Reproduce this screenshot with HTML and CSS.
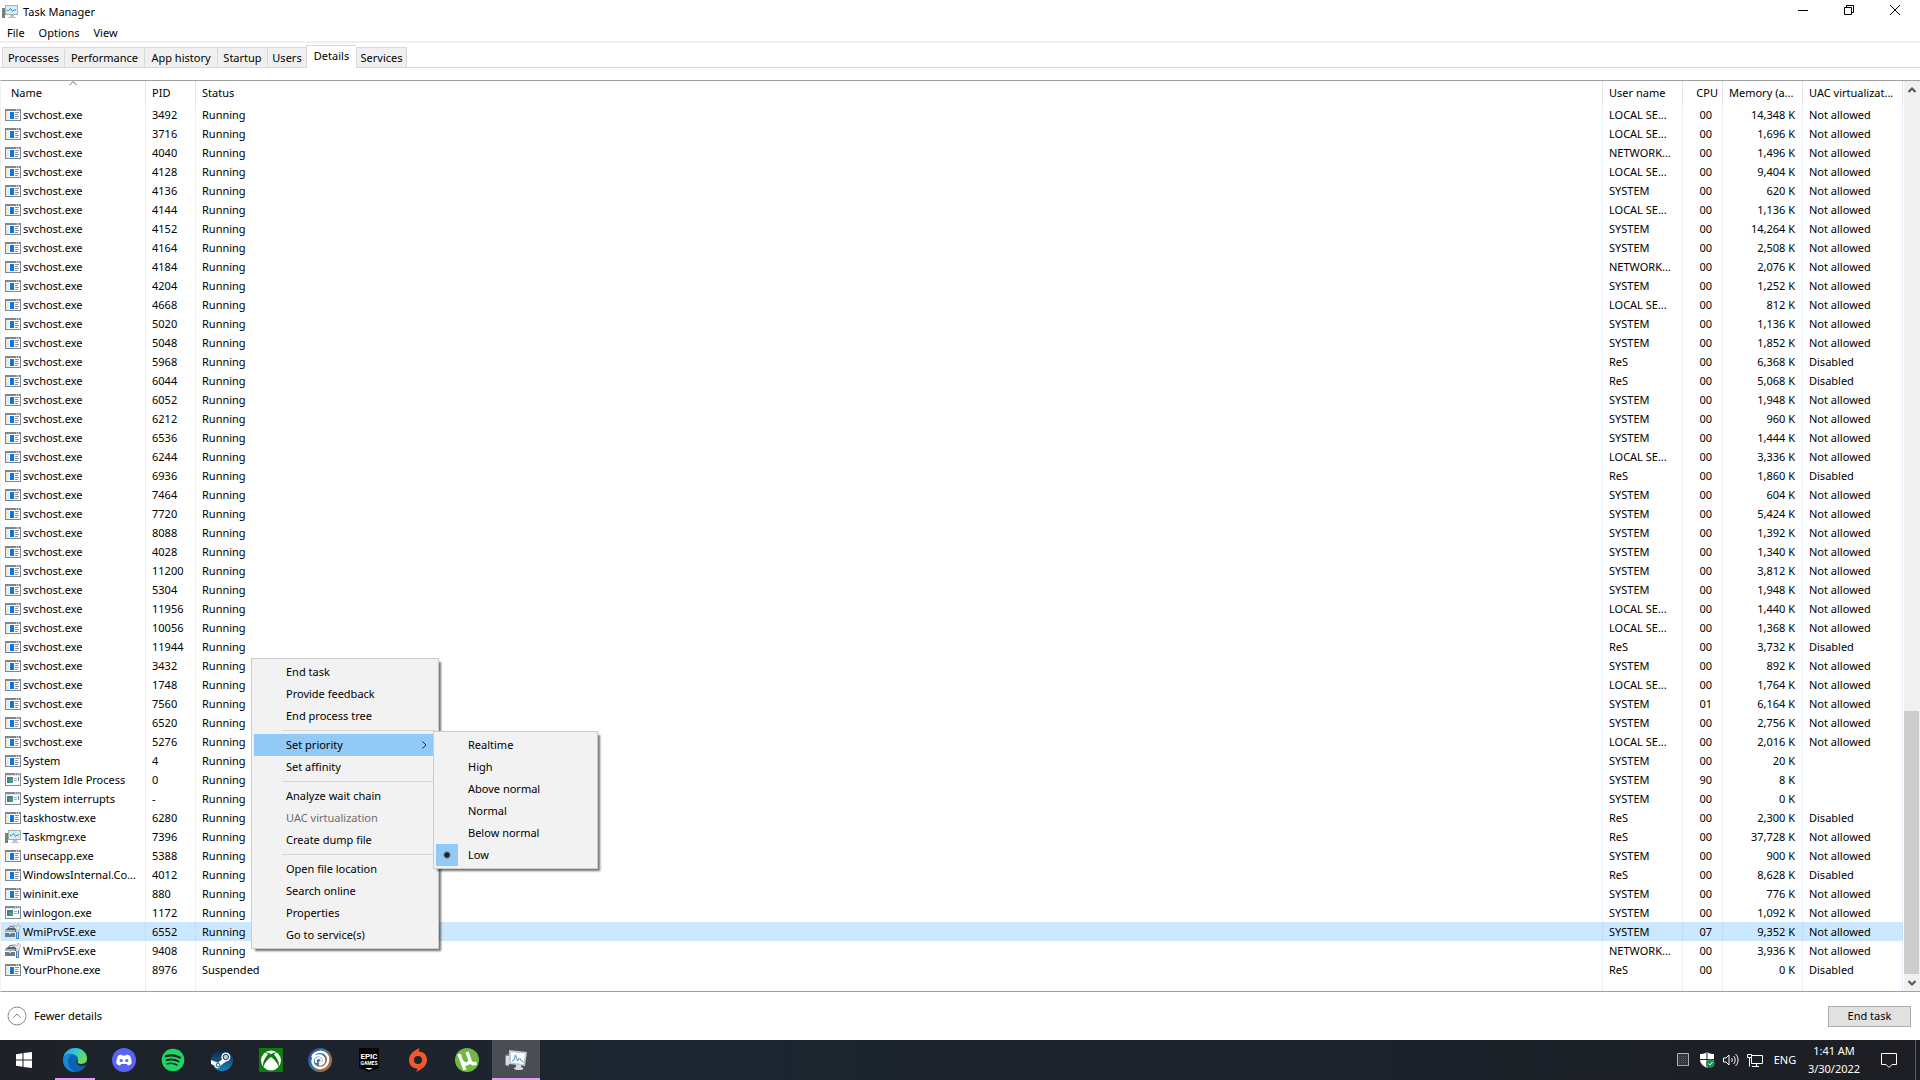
FILE: index.html
```html
<!DOCTYPE html>
<html lang="en">

<head>
    <meta charset="UTF-8">
    <meta name="viewport" content="width=device-width, initial-scale=1.0">
    <title>Task Manager</title>
    <link rel="stylesheet" href="styles.css">
</head>

<body>
    <!-- shared process icons -->
    <svg class="sprite" aria-hidden="true">
        <symbol id="icon-app" viewBox="0 0 16 16">
            <path fill="#7e8790" d="M0 2h16v12H0z" />
            <path fill="#fff" d="M1 4h14v9H1z" />
            <path fill="#e8eaec" d="M1 4h3v9H1z" />
            <path fill="#0a78d7" d="M5 5h4v7H5z" />
            <path fill="#8a929a" d="M10 5h4v1h-4zM10 7h3v1h-3zM10 9h4v1h-4zM10 11h3v1h-3z" />
            <path fill="#fff" d="M11 2.5h1v1h-1zM13 2.5h1v1h-1z" />
        </symbol>
        <symbol id="icon-system" viewBox="0 0 16 16">
            <path fill="#838b8f" d="M0 1h16v13H0z" />
            <path fill="#fdfdfd" d="M1 3h14v10H1z" />
            <path fill="#e0e3e6" d="M1 3h14v1H1z" />
            <path fill="#46799a" d="M2 5h6v6H2z" />
            <path fill="#4d9a7e" d="M3 7h5v4H5z" />
            <path fill="#a7afb6" d="M9 6h3v1H9zM9 8h3v1H9z" />
            <path fill="#4b8fa7" d="M13 5h1v4h-1z" />
            <path fill="#fff" d="M10 1.5h1v1h-1zM12 1.5h1v1h-1zM14 1.5h1v1h-1z" />
        </symbol>
        <symbol id="icon-taskmgr" viewBox="0 0 16 16">
            <path fill="#777d80" d="M0 4h3v10H0z" />
            <path fill="#35c32d" d="M1 7h1v2H1z" />
            <path fill="#a9aeb1" d="M3 1h13v10H3z" />
            <path fill="#e5e8e9" d="M4 2h11v8H4z" />
            <path fill="#d2effa" d="M5 3h9v6H5z" />
            <path fill="none" stroke="#1795cd" d="M5 6.500h1.500l2-2 2 3 1.500-1.500h2" />
            <path fill="#bfc3c5" d="M8 11h4v2h2v1H6v-1h2z" />
        </symbol>
        <symbol id="icon-toolbox" viewBox="0 0 16 16">
            <path fill="none" stroke="#6a737a" d="M4 5V3l4-1v3" />
            <path fill="#59636b" d="M0 6l3-2h8v4H0z" />
            <path fill="#a9b1b8" d="M0 6h10v2H0z" />
            <path fill="#6f7b85" d="M0 9h10v4H0z" />
            <path fill="#d4dade" d="M4 8h2v2H4z" />
            <path fill="#e6eaed" stroke="#8b949b" stroke-width=".6" d="M9 1l3 2 1-3c3 1 3 4 1 5v4h-2V6C10 5 9 3 9 1z" />
            <path fill="#4a80bb" d="M11 8h3v7h-3z" />
            <path fill="#b5d3ef" d="M12 8h1v6h-1z" />
        </symbol>
    </svg>

    <main class="window">
        <header class="titlebar">
            <svg class="icon" viewBox="0 0 16 16"><use href="#icon-taskmgr" /></svg>
            <h1>Task Manager</h1>
            <div class="window-buttons">
                <button type="button" aria-label="Minimize">
                    <svg viewBox="0 0 10 10"><path d="M0 5.500h10" /></svg>
                </button>
                <button type="button" aria-label="Restore">
                    <svg viewBox="0 0 10 10"><path d="M.5 2.500h7v7h-7zM2.500 2.500v-2h7v7h-2" /></svg>
                </button>
                <button type="button" aria-label="Close">
                    <svg viewBox="0 0 10 10"><path d="M0 0l10 10M10 0L0 10" /></svg>
                </button>
            </div>
        </header>

        <nav class="menubar">
            <button type="button">File</button>
            <button type="button">Options</button>
            <button type="button">View</button>
        </nav>

        <div class="tabs" role="tablist">
            <button type="button" role="tab">Processes</button>
            <button type="button" role="tab">Performance</button>
            <button type="button" role="tab">App history</button>
            <button type="button" role="tab">Startup</button>
            <button type="button" role="tab">Users</button>
            <button type="button" role="tab" class="selected" aria-selected="true">Details</button>
            <button type="button" role="tab">Services</button>
        </div>

        <section class="details">
            <table>
                <colgroup>
                    <col class="col-name">
                    <col class="col-pid">
                    <col class="col-status">
                    <col class="col-user">
                    <col class="col-cpu">
                    <col class="col-memory">
                    <col class="col-uac">
                </colgroup>
                <thead>
                    <tr>
                        <th class="sorted">Name
                            <svg class="sort-arrow" viewBox="0 0 8 4"><path d="M.5 4L4 .5 7.500 4" /></svg>
                        </th>
                        <th>PID</th>
                        <th>Status</th>
                        <th>User name</th>
                        <th class="cpu">CPU</th>
                        <th>Memory (a...</th>
                        <th>UAC virtualizat...</th>
                    </tr>
                </thead>
                <tbody id="processes"></tbody>
            </table>
            <div class="scrollbar">
                <button type="button" aria-label="Scroll up">
                    <svg viewBox="0 0 8 6"><path d="M.5 5L4 1.500 7.500 5" /></svg>
                </button>
                <div class="track">
                    <div class="thumb"></div>
                </div>
                <button type="button" aria-label="Scroll down">
                    <svg viewBox="0 0 8 6"><path d="M.5 1L4 4.500 7.500 1" /></svg>
                </button>
            </div>
        </section>

        <footer class="footer">
            <button type="button" class="fewer">
                <svg viewBox="0 0 20 20"><circle cx="10" cy="10" r="9" /><path d="M6 12l4-4 4 4" /></svg>
                Fewer details
            </button>
            <button type="button" class="end-task">End task</button>
        </footer>

        <div class="menu context-menu">
            <button type="button">End task</button>
            <button type="button">Provide feedback</button>
            <button type="button">End process tree</button>
            <hr>
            <div class="has-submenu">
                <button type="button" class="active">Set priority
                    <svg viewBox="0 0 5 8"><path d="M.5 .5L4 4 .5 7.500" /></svg>
                </button>
                <div class="menu submenu">
                    <label><input type="radio" name="priority">Realtime</label>
                    <label><input type="radio" name="priority">High</label>
                    <label><input type="radio" name="priority">Above normal</label>
                    <label><input type="radio" name="priority">Normal</label>
                    <label><input type="radio" name="priority">Below normal</label>
                    <label><input type="radio" name="priority" checked>Low</label>
                </div>
            </div>
            <button type="button">Set affinity</button>
            <hr>
            <button type="button">Analyze wait chain</button>
            <button type="button" disabled>UAC virtualization</button>
            <button type="button">Create dump file</button>
            <hr>
            <button type="button">Open file location</button>
            <button type="button">Search online</button>
            <button type="button">Properties</button>
            <button type="button">Go to service(s)</button>
        </div>
    </main>

    <div class="taskbar">
        <button type="button" class="start" aria-label="Start">
            <svg viewBox="0 0 24 24">
                <path fill="#fff" d="M4 6.200l6.500-.9v6.200H4zM11.500 5.100L20 4v7.500h-8.500zM4 12.500h6.500v6.200L4 17.800zM11.500 12.500H20V20l-8.500-1.100z" />
            </svg>
        </button>
        <div class="apps">
            <button type="button" class="running" aria-label="Edge">
                <svg viewBox="0 0 24 24">
                    <defs>
                        <linearGradient id="edge-top" x1="0" x2="1" y1="0" y2=".4">
                            <stop offset="0" stop-color="#219de2" />
                            <stop offset=".5" stop-color="#31c5d8" />
                            <stop offset="1" stop-color="#6bdc55" />
                        </linearGradient>
                    </defs>
                    <circle cx="12" cy="12" r="12" fill="#0c62b5" />
                    <path fill="url(#edge-top)" d="M0 11C1 4 6 0 12 0c7 0 12 5 12 10 0 4-3 6-6 6-3 0-4-1-3.500-2C17 9 12 6 8 6 4 6 1 8 0 11z" />
                    <path fill="#1688d5" d="M0 12c1-4 5-6 9-5-4 2-5 6-3 11 1 3 4 5 6 6C5 24 0 18 0 12z" />
                    <path fill="#1d222b" d="M14 12c-2 3 1 6 5 6 2 0 3-1 4-1l1-3c-1 1-3 2-6 2-3 0-4-1-3.500-2z" />
                </svg>
            </button>
            <button type="button" aria-label="Discord">
                <svg viewBox="0 0 24 24">
                    <circle cx="12" cy="12" r="12" fill="#5865f2" />
                    <path fill="#fff" d="M9.500 6.500l.6 1h3.800l.6-1c1.500.2 2.500.6 3.500 1.200 1.200 2.500 1.800 5 1.500 8-1.200 1-2.500 1.500-3.700 1.800l-.8-1.500H9l-.8 1.500c-1.200-.3-2.500-.8-3.700-1.800-.3-3 .3-5.500 1.500-8 1-.6 2-1 3.500-1.200z" />
                    <circle cx="9.200" cy="12.500" r="1.600" fill="#5865f2" />
                    <circle cx="14.800" cy="12.500" r="1.600" fill="#5865f2" />
                </svg>
            </button>
            <button type="button" aria-label="Spotify">
                <svg viewBox="0 0 24 24">
                    <circle cx="12" cy="12" r="11.300" fill="#1fd662" />
                    <path fill="none" stroke="#1d222b" stroke-linecap="round" stroke-width="2.200" d="M4.800 8.300c5-1.500 10-.9 14.200 1.300" />
                    <path fill="none" stroke="#1d222b" stroke-linecap="round" stroke-width="1.800" d="M5.600 12.200c4.200-1.200 8.400-.7 12 1.200" />
                    <path fill="none" stroke="#1d222b" stroke-linecap="round" stroke-width="1.500" d="M6.200 15.800c3.500-.9 6.900-.5 9.800 1.200" />
                </svg>
            </button>
            <button type="button" aria-label="Steam">
                <svg viewBox="0 0 24 24">
                    <defs>
                        <linearGradient id="steam-bg" x1="0" x2="0" y1="0" y2="1">
                            <stop offset="0" stop-color="#111d3e" />
                            <stop offset="1" stop-color="#1686b9" />
                        </linearGradient>
                    </defs>
                    <circle cx="12" cy="12" r="11" fill="url(#steam-bg)" />
                    <path fill="#fff" d="M1 12l7 2.800L12.500 11l3.500 2.500-6 4.500c-.5 3-5 3-5.500-.5L1 16z" />
                    <circle cx="15.800" cy="9" r="4.500" fill="#fff" />
                    <circle cx="15.800" cy="9" r="2.700" fill="#c3cdda" stroke="#183456" />
                    <circle cx="8" cy="17" r="1.800" fill="#fff" stroke="#1b608c" />
                </svg>
            </button>
            <button type="button" aria-label="Xbox">
                <svg viewBox="0 0 24 24">
                    <rect width="24" height="24" rx="1" fill="#107c10" />
                    <circle cx="12" cy="12.500" r="10" fill="#fff" />
                    <path fill="#107c10" d="M5 4.500c2-1 5 .2 7 1.800 2-1.600 5-2.800 7-1.800-1.300-.2-2.500.3-4 2 3 3.500 6 8 4.500 12.500-1-4-4-7.500-7.500-10-3.500 2.500-6.500 6-7.500 10C3 14.500 6 10 9 6.500c-1.500-1.700-2.700-2.200-4-2z" />
                </svg>
            </button>
            <button type="button" aria-label="Ubisoft Connect">
                <svg viewBox="0 0 24 24">
                    <defs>
                        <linearGradient id="ubi-bg" x1="0" x2="1" y1=".2" y2=".9">
                            <stop offset="0" stop-color="#4b2f96" />
                            <stop offset=".35" stop-color="#257ca7" />
                            <stop offset=".7" stop-color="#9a6a50" />
                            <stop offset="1" stop-color="#d06a31" />
                        </linearGradient>
                    </defs>
                    <circle cx="12" cy="12" r="12" fill="url(#ubi-bg)" />
                    <path fill="none" stroke="#fff" stroke-linecap="round" stroke-width="2.400" d="M4.500 8.500C7 3.500 14 2 18 6c4.500 5 1.500 13.500-6 14-6 0-9.500-6-6-10.500 3-3.500 9-2.500 10 2 .5 3-2 5-4 5" />
                    <path fill="none" stroke="#fff" stroke-linecap="round" stroke-width="2" d="M8 14c-1.200-3 2-5 4.500-3.500 2 1.500.8 4-1 4" />
                </svg>
            </button>
            <button type="button" aria-label="Epic Games">
                <svg viewBox="0 0 24 24">
                    <path fill="#050505" d="M2 1q0-1 1-1h18q1 0 1 1v19l-10 4-10-4z" />
                    <text class="epic" x="12" y="11">EPIC</text>
                    <text class="games" x="12" y="17">GAMES</text>
                    <path fill="#fff" d="M8 20h8l-4 1.800z" />
                </svg>
            </button>
            <button type="button" aria-label="Origin">
                <svg viewBox="0 0 24 24">
                    <path fill="#f1582c" fill-rule="evenodd" d="M14 0c-1 1.500-1.200 2.600-1.200 3.500C18 3.600 21 7.500 21 12c0 5-4 9-11 12 1-1.500 1.300-2.500 1.300-3.500C6 20.400 3 16.500 3 12 3 7 7 2.500 14 0zM12 8a4 4 0 1 0 0 8 4 4 0 0 0 0-8z" />
                </svg>
            </button>
            <button type="button" aria-label="uTorrent">
                <svg viewBox="0 0 24 24">
                    <circle cx="12" cy="12" r="12" fill="#6fb844" />
                    <path fill="none" stroke="#fff" stroke-width="3.400" d="M4 6l6 16M7 13c1.500 4.500 8 3.500 7.500-.5" />
                    <path fill="none" stroke="#fff" stroke-width="3.400" d="M12 4l3.500 9.500c1 2.500 3 3 6 1.500" />
                </svg>
            </button>
            <button type="button" class="running current" aria-label="Task Manager">
                <svg viewBox="0 0 24 24">
                    <path fill="#858a8c" d="M1 7l4-1v13l-4-2z" />
                    <path fill="#d8dcdc" d="M2 8h3v9H2z" />
                    <path fill="#c4c8ca" d="M5 2l18 2-2 14-16-2z" />
                    <path fill="#fbfdfe" d="M7 4l14 1.500L19.500 16 7 14.500z" />
                    <path fill="none" stroke="#3695d1" d="M8 13l2-1 1.500-5 2 6 2-3 2 3 2 1" />
                    <path fill="#d7dadb" d="M12 17h5v2c4 1 3 3-2 3s-7-2-3-3z" />
                </svg>
            </button>
        </div>
        <div class="tray">
            <button type="button" aria-label="Hardware monitor">
                <svg viewBox="0 0 16 16">
                    <path fill="#33373b" stroke="#aeb2b5" d="M2.500 1.500h11v12h-11z" />
                    <path stroke="#555a60" stroke-dasharray="1 1" d="M4 4.500h8M4 6.500h8M4 8.500h8M4 10.500h8" />
                    <path fill="#55bdf0" d="M2 13h12v1H2z" />
                </svg>
            </button>
            <button type="button" aria-label="Windows Security">
                <svg viewBox="0 0 16 16">
                    <path fill="#fff" d="M8 0c2 1.500 4 2 7 2v6c0 3-3 6-7 8-4-2-7-5-7-8V2c3 0 5-.5 7-2z" />
                    <path stroke="#1c1f26" d="M8 0v16M1 7.500h14" />
                    <circle cx="11.500" cy="11.500" r="4.300" fill="#169150" />
                    <path fill="none" stroke="#fff" d="M9.500 11.500l1.500 1.500 2.500-3" />
                </svg>
            </button>
            <button type="button" aria-label="Volume">
                <svg viewBox="0 0 16 16">
                    <path class="line" d="M.5 6v4H3l3 3V3L3 6zM8.500 6c1 1 1 3 0 4M10.500 4c2.200 2 2.200 6 0 8M12.500 2c3.400 3 3.400 9 0 12" />
                </svg>
            </button>
            <button type="button" aria-label="Network">
                <svg viewBox="0 0 16 16">
                    <path class="line" d="M5 3.500h10.500v8h-11V6M.5 2.500h4v3h-4zM2.500 5.500v9M9.500 11.500v3M5 14.500h7" />
                </svg>
            </button>
            <button type="button" class="language">ENG</button>
            <button type="button" class="clock">
                <span>1:41 AM</span>
                <span>3/30/2022</span>
            </button>
            <button type="button" class="notifications" aria-label="Notifications">
                <svg viewBox="0 0 16 16">
                    <path class="line" d="M.5 1.500h15v11H11l-3 3-3-3H.5z" />
                </svg>
            </button>
            <button type="button" class="show-desktop" aria-label="Show desktop"></button>
        </div>
    </div>

    <script src="script.js"></script>
</body>

</html>
```
FILE: styles.css
```css
* {
    margin: 0;
    padding: 0;
    box-sizing: border-box;
    font-family: "Noto Sans", "Open Sans", sans-serif;
}

body {
    display: flex;
    flex-direction: column;
    min-height: 100vh;
    background-color: #fff;
    color: #000;
    font-size: 11px;
    line-height: 16px;
}

button {
    border: none;
    background: none;
    color: inherit;
    font-size: inherit;
    line-height: inherit;
}

svg {
    display: block;
    flex: none;
}

.sprite {
    position: absolute;
    width: 0;
    height: 0;
}

.icon {
    width: 16px;
    height: 16px;
}

.window {
    position: relative;
    display: flex;
    flex-direction: column;
    flex: 1;
}

/* title and menu */

.titlebar {
    display: flex;
    align-items: center;
    gap: 5px;
    height: 24px;
    padding: 0 2px;
}

.titlebar h1 {
    font-size: 11px;
    font-weight: normal;
}

.window-buttons {
    display: flex;
    align-self: flex-start;
    margin-left: auto;
}

.window-buttons button {
    display: flex;
    justify-content: center;
    align-items: center;
    width: 46px;
    height: 20px;
}

.window-buttons svg {
    width: 10px;
    height: 10px;
    fill: none;
    stroke: #000;
}

.menubar {
    display: flex;
    gap: 14px;
    height: 19px;
    padding: 1px 7px;
    border-bottom: 2px solid #f0f0f0;
}

/* tabs */

.tabs {
    display: grid;
    grid-template-columns: 62px 80px 73px 50px 39px 50px 51px;
    align-items: end;
    height: 25px;
    padding: 0 2px;
    border-bottom: 1px solid #d9d9d9;
}

.tabs button {
    height: 20px;
    border: 1px solid #d9d9d9;
    border-bottom: none;
    border-right: none;
    background-color: #f0f0f0;
    white-space: nowrap;
}

.tabs button:last-child {
    border-right: 1px solid #d9d9d9;
}

.tabs .selected {
    height: 23px;
    margin-bottom: -1px;
    padding-bottom: 3px;
    background-color: #fff;
}

/* process list */

.details {
    display: flex;
    flex: 1;
    margin-top: 12px;
    border-top: 1px solid #a0a0a0;
    border-bottom: 1px solid #a0a0a0;
    border-left: 1px solid #f0f0f0;
}

table {
    flex: 1;
    table-layout: fixed;
    border-collapse: separate;
    border-spacing: 0;
}

.col-name {
    width: 145px;
}

.col-pid {
    width: 50px;
}

.col-user,
.col-memory {
    width: 80px;
}

.col-cpu {
    width: 40px;
}

.col-uac {
    width: 100px;
}

th,
td {
    padding: 0 6px;
    border-right: 1px solid #e8f1fb;
    overflow: hidden;
    text-align: left;
    white-space: nowrap;
}

th {
    position: relative;
    height: 24px;
    border-right-color: #e5e5e5;
    font-weight: normal;
}

th.sorted {
    padding-left: 10px;
}

th.cpu {
    padding-right: 4px;
    text-align: right;
}

.sort-arrow {
    position: absolute;
    top: 0;
    left: calc(50% - 4px);
    width: 8px;
    height: 4px;
    fill: none;
    stroke: #6d6d6d;
}

td {
    height: 19px;
}

.filler td {
    height: auto;
}

td.name {
    padding-left: 4px;
}

.process {
    display: flex;
    align-items: center;
    gap: 2px;
}

.number {
    padding-right: 7px;
    text-align: right;
}

td.cpu {
    padding-right: 10px;
}

.selected-row td {
    border-right-color: #c0e0fa;
    background-color: #cce8ff;
}

.scrollbar {
    display: flex;
    flex-direction: column;
    width: 16px;
    padding-right: 1px;
    margin-left: 1px;
    background-color: #f0f0f0;
}

.scrollbar button {
    display: flex;
    justify-content: center;
    align-items: center;
    height: 17px;
}

.scrollbar svg {
    width: 8px;
    height: 6px;
    fill: none;
    stroke: #555;
    stroke-width: 2;
}

.track {
    display: flex;
    flex-direction: column;
    justify-content: flex-end;
    flex: 1;
}

.thumb {
    height: 30%;
    background-color: #cdcdcd;
}

/* footer */

.footer {
    display: flex;
    justify-content: space-between;
    align-items: center;
    height: 48px;
    padding: 0 9px 0 7px;
}

.fewer {
    display: flex;
    align-items: center;
    gap: 7px;
}

.fewer svg {
    width: 20px;
    height: 20px;
    fill: none;
    stroke: #8a8a8a;
}

.end-task {
    width: 83px;
    height: 21px;
    border: 1px solid #adadad;
    background-color: #e1e1e1;
}

/* context menus */

.menu {
    position: absolute;
    padding: 2px;
    border: 1px solid #ccc;
    background-color: #f2f2f2;
    box-shadow: 3px 3px 2px -1px rgba(0, 0, 0, 0.55);
}

.context-menu {
    top: 658px;
    left: 251px;
    width: 188px;
}

.menu button,
.menu label {
    display: flex;
    align-items: center;
    width: 100%;
    height: 22px;
    padding-left: 32px;
}

.menu button:disabled {
    color: #6d6d6d;
}

.menu .active {
    justify-content: space-between;
    padding-right: 9px;
    background-color: #91c9f7;
}

.menu .active svg {
    width: 5px;
    height: 8px;
    fill: none;
    stroke: #222;
}

.menu hr {
    height: 1px;
    margin: 3px 0 3px 28px;
    border: none;
    background-color: #d7d7d7;
}

.has-submenu {
    position: relative;
}

.submenu {
    top: -3px;
    left: calc(100% - 3px);
    width: 165px;
}

.menu .submenu label {
    gap: 10px;
    padding-left: 0;
}

.submenu input {
    width: 22px;
    height: 22px;
    appearance: none;
}

.submenu input:checked {
    background: radial-gradient(circle, #222 2px, #91c9f7 4px);
}

/* taskbar */

.taskbar {
    display: flex;
    height: 40px;
    background: linear-gradient(to right, #1e2128, #1c2530 35%, #1d222b 70%, #1c1e23);
    color: #fff;
}

.taskbar button {
    display: flex;
    justify-content: center;
    align-items: center;
}

.start,
.apps button {
    width: 48px;
    height: 40px;
}

.start svg,
.apps svg {
    width: 24px;
    height: 24px;
}

.apps {
    display: flex;
    gap: 1px;
    margin-left: 3px;
}

.apps .running {
    position: relative;
}

.running::after {
    content: "";
    position: absolute;
    right: 4px;
    bottom: 0;
    left: 4px;
    height: 2px;
    background-color: #e79af3;
}

.apps .current {
    background-color: #4a4d53;
}

.current::after {
    right: 0;
    left: 0;
}

.epic,
.games {
    fill: #fff;
    font-family: Roboto, sans-serif;
    font-weight: bold;
    text-anchor: middle;
}

.epic {
    font-size: 8px;
}

.games {
    font-size: 5px;
}

.tray {
    display: flex;
    margin-left: auto;
}

.tray button {
    width: 24px;
}

.tray svg {
    width: 16px;
    height: 16px;
}

.tray .line {
    fill: none;
    stroke: #fff;
}

.tray .language {
    width: 36px;
}

.tray .clock {
    flex-direction: column;
    width: 62px;
    line-height: 18px;
}

.tray .notifications {
    width: 48px;
}

.tray .show-desktop {
    width: 5px;
    margin-left: 2px;
    border-left: 1px solid #5b5d61;
}
```
FILE: script.js
```js
// name, pid, user, cpu, memory, uac
const NA = 'Not allowed';
const DIS = 'Disabled';
const LOCAL = 'LOCAL SE...';
const NETWORK = 'NETWORK...';

const processes = [
    ['svchost.exe', '3492', LOCAL, '00', '14,348 K', NA],
    ['svchost.exe', '3716', LOCAL, '00', '1,696 K', NA],
    ['svchost.exe', '4040', NETWORK, '00', '1,496 K', NA],
    ['svchost.exe', '4128', LOCAL, '00', '9,404 K', NA],
    ['svchost.exe', '4136', 'SYSTEM', '00', '620 K', NA],
    ['svchost.exe', '4144', LOCAL, '00', '1,136 K', NA],
    ['svchost.exe', '4152', 'SYSTEM', '00', '14,264 K', NA],
    ['svchost.exe', '4164', 'SYSTEM', '00', '2,508 K', NA],
    ['svchost.exe', '4184', NETWORK, '00', '2,076 K', NA],
    ['svchost.exe', '4204', 'SYSTEM', '00', '1,252 K', NA],
    ['svchost.exe', '4668', LOCAL, '00', '812 K', NA],
    ['svchost.exe', '5020', 'SYSTEM', '00', '1,136 K', NA],
    ['svchost.exe', '5048', 'SYSTEM', '00', '1,852 K', NA],
    ['svchost.exe', '5968', 'ReS', '00', '6,368 K', DIS],
    ['svchost.exe', '6044', 'ReS', '00', '5,068 K', DIS],
    ['svchost.exe', '6052', 'SYSTEM', '00', '1,948 K', NA],
    ['svchost.exe', '6212', 'SYSTEM', '00', '960 K', NA],
    ['svchost.exe', '6536', 'SYSTEM', '00', '1,444 K', NA],
    ['svchost.exe', '6244', LOCAL, '00', '3,336 K', NA],
    ['svchost.exe', '6936', 'ReS', '00', '1,860 K', DIS],
    ['svchost.exe', '7464', 'SYSTEM', '00', '604 K', NA],
    ['svchost.exe', '7720', 'SYSTEM', '00', '5,424 K', NA],
    ['svchost.exe', '8088', 'SYSTEM', '00', '1,392 K', NA],
    ['svchost.exe', '4028', 'SYSTEM', '00', '1,340 K', NA],
    ['svchost.exe', '11200', 'SYSTEM', '00', '3,812 K', NA],
    ['svchost.exe', '5304', 'SYSTEM', '00', '1,948 K', NA],
    ['svchost.exe', '11956', LOCAL, '00', '1,440 K', NA],
    ['svchost.exe', '10056', LOCAL, '00', '1,368 K', NA],
    ['svchost.exe', '11944', 'ReS', '00', '3,732 K', DIS],
    ['svchost.exe', '3432', 'SYSTEM', '00', '892 K', NA],
    ['svchost.exe', '1748', LOCAL, '00', '1,764 K', NA],
    ['svchost.exe', '7560', 'SYSTEM', '01', '6,164 K', NA],
    ['svchost.exe', '6520', 'SYSTEM', '00', '2,756 K', NA],
    ['svchost.exe', '5276', LOCAL, '00', '2,016 K', NA],
    ['System', '4', 'SYSTEM', '00', '20 K', ''],
    ['System Idle Process', '0', 'SYSTEM', '90', '8 K', ''],
    ['System interrupts', '-', 'SYSTEM', '00', '0 K', ''],
    ['taskhostw.exe', '6280', 'ReS', '00', '2,300 K', DIS],
    ['Taskmgr.exe', '7396', 'ReS', '00', '37,728 K', NA],
    ['unsecapp.exe', '5388', 'SYSTEM', '00', '900 K', NA],
    ['WindowsInternal.Co...', '4012', 'ReS', '00', '8,628 K', DIS],
    ['wininit.exe', '880', 'SYSTEM', '00', '776 K', NA],
    ['winlogon.exe', '1172', 'SYSTEM', '00', '1,092 K', NA],
    ['WmiPrvSE.exe', '6552', 'SYSTEM', '07', '9,352 K', NA],
    ['WmiPrvSE.exe', '9408', NETWORK, '00', '3,936 K', NA],
    ['YourPhone.exe', '8976', 'ReS', '00', '0 K', DIS]
];

const icons = {
    'System Idle Process': 'system',
    'System interrupts': 'system',
    'winlogon.exe': 'system',
    'Taskmgr.exe': 'taskmgr',
    'WmiPrvSE.exe': 'toolbox'
};

const selectedPid = '6552';

const rows = processes.map(([name, pid, user, cpu, memory, uac]) => `
    <tr class="${pid === selectedPid ? 'selected-row' : ''}">
        <td class="name"><div class="process">
            <svg class="icon" viewBox="0 0 16 16"><use href="#icon-${icons[name] || 'app'}" /></svg>
            <span>${name}</span>
        </div></td>
        <td>${pid}</td>
        <td>${name === 'YourPhone.exe' ? 'Suspended' : 'Running'}</td>
        <td>${user}</td>
        <td class="number cpu">${cpu}</td>
        <td class="number">${memory}</td>
        <td>${uac}</td>
    </tr>`);

// empty row carries the column lines down to the bottom of the list
rows.push('<tr class="filler">' + '<td></td>'.repeat(7) + '</tr>');

document.getElementById('processes').innerHTML = rows.join('');
```
